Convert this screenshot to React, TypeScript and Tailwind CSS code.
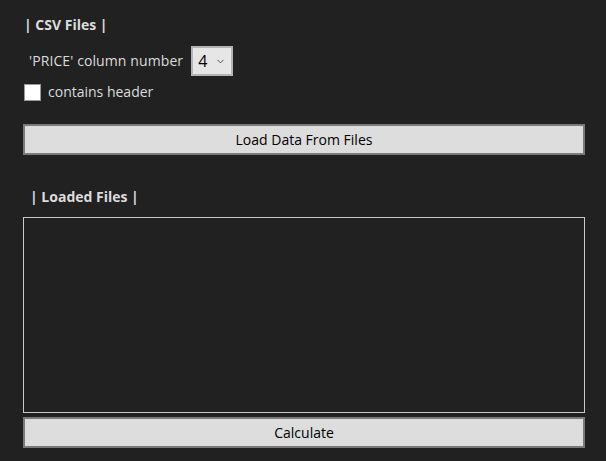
import { ChevronDown } from 'lucide-react';

export default function App() {
  return (
    <div className="w-[606px] h-[461px] bg-[#212121] text-[#dcdcdc] font-['Segoe_UI','Open_Sans',sans-serif] text-[14px] pl-[23px] pr-[21px] pt-[14px]">
      <div className="pl-px font-bold leading-[22px]">| CSV Files |</div>

      <div className="flex items-center mt-[10px] pl-[6px] gap-[8px]">
        <span className="leading-[20px] tracking-[0.1px]">'PRICE' column number</span>
        <div className="w-[42px] h-[30px] border-2 border-[#b4b4b4] bg-[#e6e6e6] text-black flex items-center pl-[5px] gap-[8px]">
          <span className="text-[16px]">4</span>
          <ChevronDown className="size-[11px] text-[#444]" strokeWidth={2} />
        </div>
      </div>

      <label className="flex items-center gap-[7px] mt-[6px] pl-px">
        <span className="w-[17px] h-[17px] bg-white border border-[#999]" />
        <span className="leading-[20px]">contains header</span>
      </label>

      <button className="mt-[22px] w-full h-[31px] border-2 border-[#7a7a7a] bg-[#dddddd] text-black">
        Load Data From Files
      </button>

      <div className="mt-[31px] pl-[7px] font-bold leading-[22px]">| Loaded Files |</div>

      <div className="mt-[9px] w-full h-[196px] border border-[#c8c8c8]" />

      <button className="mt-[4px] w-full h-[31px] border-2 border-[#7a7a7a] bg-[#dddddd] text-black">
        Calculate
      </button>
    </div>
  );
}
